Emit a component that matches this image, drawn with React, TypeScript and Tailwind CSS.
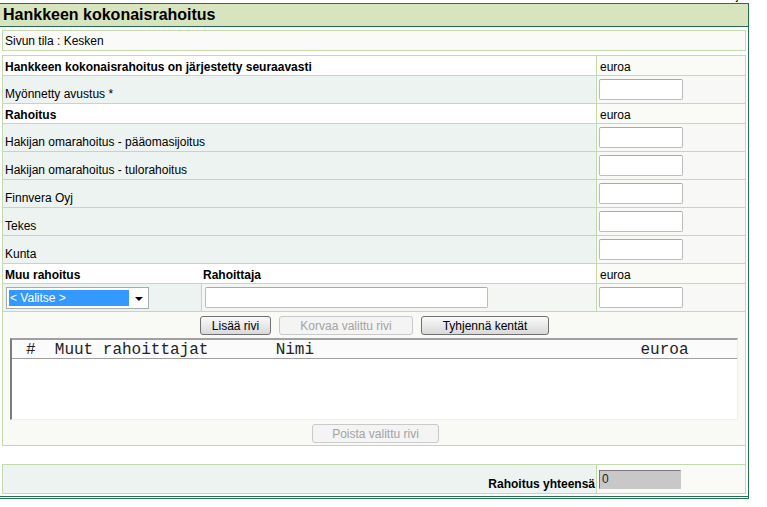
import React from "react";

const line = "border-[#c4d9ac]";

function TextBox({ w, gray, value }: { w: string; gray?: boolean; value?: string }) {
  return (
    <div
      className={
        gray
          ? `${w} h-[19px] border border-t-[#7a7a7a] border-l-[#7a7a7a] border-r-[#c8c8c8] border-b-[#c8c8c8] bg-[#c8c8c8] pl-[2px] text-[12px] leading-[16px] text-[#222]`
          : `${w} h-[21px] rounded-[2px] border border-[#bcbcbc] border-t-[#a9a9a9] bg-white`
      }
    >
      {value}
    </div>
  );
}

function LabelRow({ label }: { label: string }) {
  return (
    <div className={`flex h-[20px] border-b ${line} bg-white`}>
      <div className={`flex w-[594px] items-end border-r ${line} pb-[1px] pl-[2px] font-bold leading-[14px]`}>
        {label}
      </div>
      <div className="flex w-[148px] items-end bg-[#fafaf7] pb-[1px] pl-[3px] leading-[14px]">euroa</div>
    </div>
  );
}

function InputRow({ label }: { label: string }) {
  return (
    <div className={`flex h-[28px] border-b ${line}`}>
      <div className={`flex w-[594px] items-end border-r ${line} bg-[#edf3f0] pb-[2px] pl-[2px] leading-[14px]`}>
        {label}
      </div>
      <div className="w-[148px] bg-[#f8f9f6] pl-[2px] pt-[3px]">
        <TextBox w="w-[84px]" />
      </div>
    </div>
  );
}

function Button({ label, w, disabled }: { label: string; w: string; disabled?: boolean }) {
  return (
    <div
      className={
        disabled
          ? `${w} flex h-[19px] items-center justify-center rounded-[3px] border border-[#c9c9c9] bg-[#f4f4f4] text-[12px] text-[#a3a3a3]`
          : `${w} flex h-[19px] items-center justify-center rounded-[3px] border border-[#707070] bg-gradient-to-b from-[#fafafa] to-[#d9d9d9] text-[12px] text-black`
      }
    >
      {label}
    </div>
  );
}

export default function App() {
  const financing = [
    "Hakijan omarahoitus - pääomasijoitus",
    "Hakijan omarahoitus - tulorahoitus",
    "Finnvera Oyj",
    "Tekes",
    "Kunta",
  ];

  return (
    <div className="relative h-[507px] w-[767px] overflow-hidden bg-white font-['Liberation_Sans',Arial,sans-serif] text-[12px] text-black">
      <span className="absolute left-[736px] top-[-12px] text-[12px] leading-[14px]">j</span>
      <div className="pt-[3px]">
        <div className="w-[749px] border-t border-r border-b-[3px] border-double border-[#236f50] pb-[2px]">
          {/* otsikko */}
          <div className="h-[23px] border-b border-[#236f50] bg-[#d8e4bd] pl-[3px] text-[16px] font-bold leading-[22px]">
            Hankkeen kokonaisrahoitus
          </div>

          <div className={`ml-[2px] mt-[3px] flex h-[21px] w-[744px] items-center border ${line} bg-[#fafaf8] pl-[2px]`}>
            Sivun tila : Kesken
          </div>

          {/* rahoitustaulukko */}
          <div className={`ml-[2px] mt-[4px] w-[744px] border-x border-t ${line}`}>
            <LabelRow label="Hankkeen kokonaisrahoitus on järjestetty seuraavasti" />
            <InputRow label="Myönnetty avustus *" />
            <LabelRow label="Rahoitus" />
            {financing.map((f) => (
              <InputRow key={f} label={f} />
            ))}

            {/* muu rahoitus */}
            <div className={`flex h-[20px] border-b ${line} bg-white`}>
              <div className={`flex w-[594px] items-end border-r ${line} pb-[1px] font-bold leading-[14px]`}>
                <span className="w-[200px] pl-[2px]">Muu rahoitus</span>
                <span>Rahoittaja</span>
              </div>
              <div className="flex w-[148px] items-end bg-[#fafaf7] pb-[1px] pl-[3px] leading-[14px]">euroa</div>
            </div>
            <div className={`flex h-[28px] border-b ${line}`}>
              <div className={`w-[199px] border-r ${line} bg-[#edf3f0] pl-[3px] pt-[3px]`}>
                <div className="flex h-[22px] w-[143px] items-center border border-[#a5acb2] bg-white p-[2px]">
                  <div className="h-[16px] w-[121px] bg-[#3399ff] pl-[1px] leading-[16px] text-white">&lt; Valitse &gt;</div>
                  <svg width="14" height="16" viewBox="0 0 14 16" className="ml-[3px]">
                    <path d="M3 7h8l-4 4z" fill="#000" />
                  </svg>
                </div>
              </div>
              <div className={`w-[395px] border-r ${line} bg-[#f3f6f2] pl-[3px] pt-[3px]`}>
                <TextBox w="w-[283px]" />
              </div>
              <div className="w-[148px] bg-[#f8f9f6] pl-[2px] pt-[3px]">
                <TextBox w="w-[84px]" />
              </div>
            </div>

            {/* muut rahoittajat */}
            <div className={`border-b ${line} bg-[#f9faf6] pb-[2px] pt-[4px]`}>
              <div className="flex justify-center gap-[8px] pl-[1px]">
                <Button label="Lisää rivi" w="w-[71px]" />
                <Button label="Korvaa valittu rivi" w="w-[134px]" disabled />
                <Button label="Tyhjennä kentät" w="w-[128px]" />
              </div>
              <div className="mx-[7px] mt-[3px] h-[82px] border-t-2 border-l-2 border-r border-b border-t-[#a0a0a0] border-l-[#7c7c7c] border-r-[#eeeeee] border-b-[#eeeeee] bg-white">
                <div className="h-[19px] border-b border-[#a0a0a0] bg-[#fbfbfb] pl-[14px] font-['Liberation_Mono',monospace] text-[16px] leading-[20px] whitespace-pre text-[#222]">
                  {"#  Muut rahoittajat       Nimi                                  euroa"}
                </div>
              </div>
              <div className="mt-[4px] flex justify-center pl-[3px]">
                <Button label="Poista valittu rivi" w="w-[127px]" disabled />
              </div>
            </div>
          </div>

          <div className={`ml-[2px] h-[18px] w-[744px] border-r ${line}`} />

          {/* yhteensä */}
          <div className={`ml-[2px] flex h-[30px] w-[744px] border ${line}`}>
            <div className={`flex w-[594px] items-end justify-end border-r ${line} bg-[#edf3f0] pb-[2px] pr-[1px] font-bold leading-[14px]`}>
              Rahoitus yhteensä
            </div>
            <div className="w-[148px] bg-[#fafaf7] pl-[2px] pt-[5px]">
              <TextBox w="w-[82px]" gray value="0" />
            </div>
          </div>
        </div>
      </div>
    </div>
  );
}
